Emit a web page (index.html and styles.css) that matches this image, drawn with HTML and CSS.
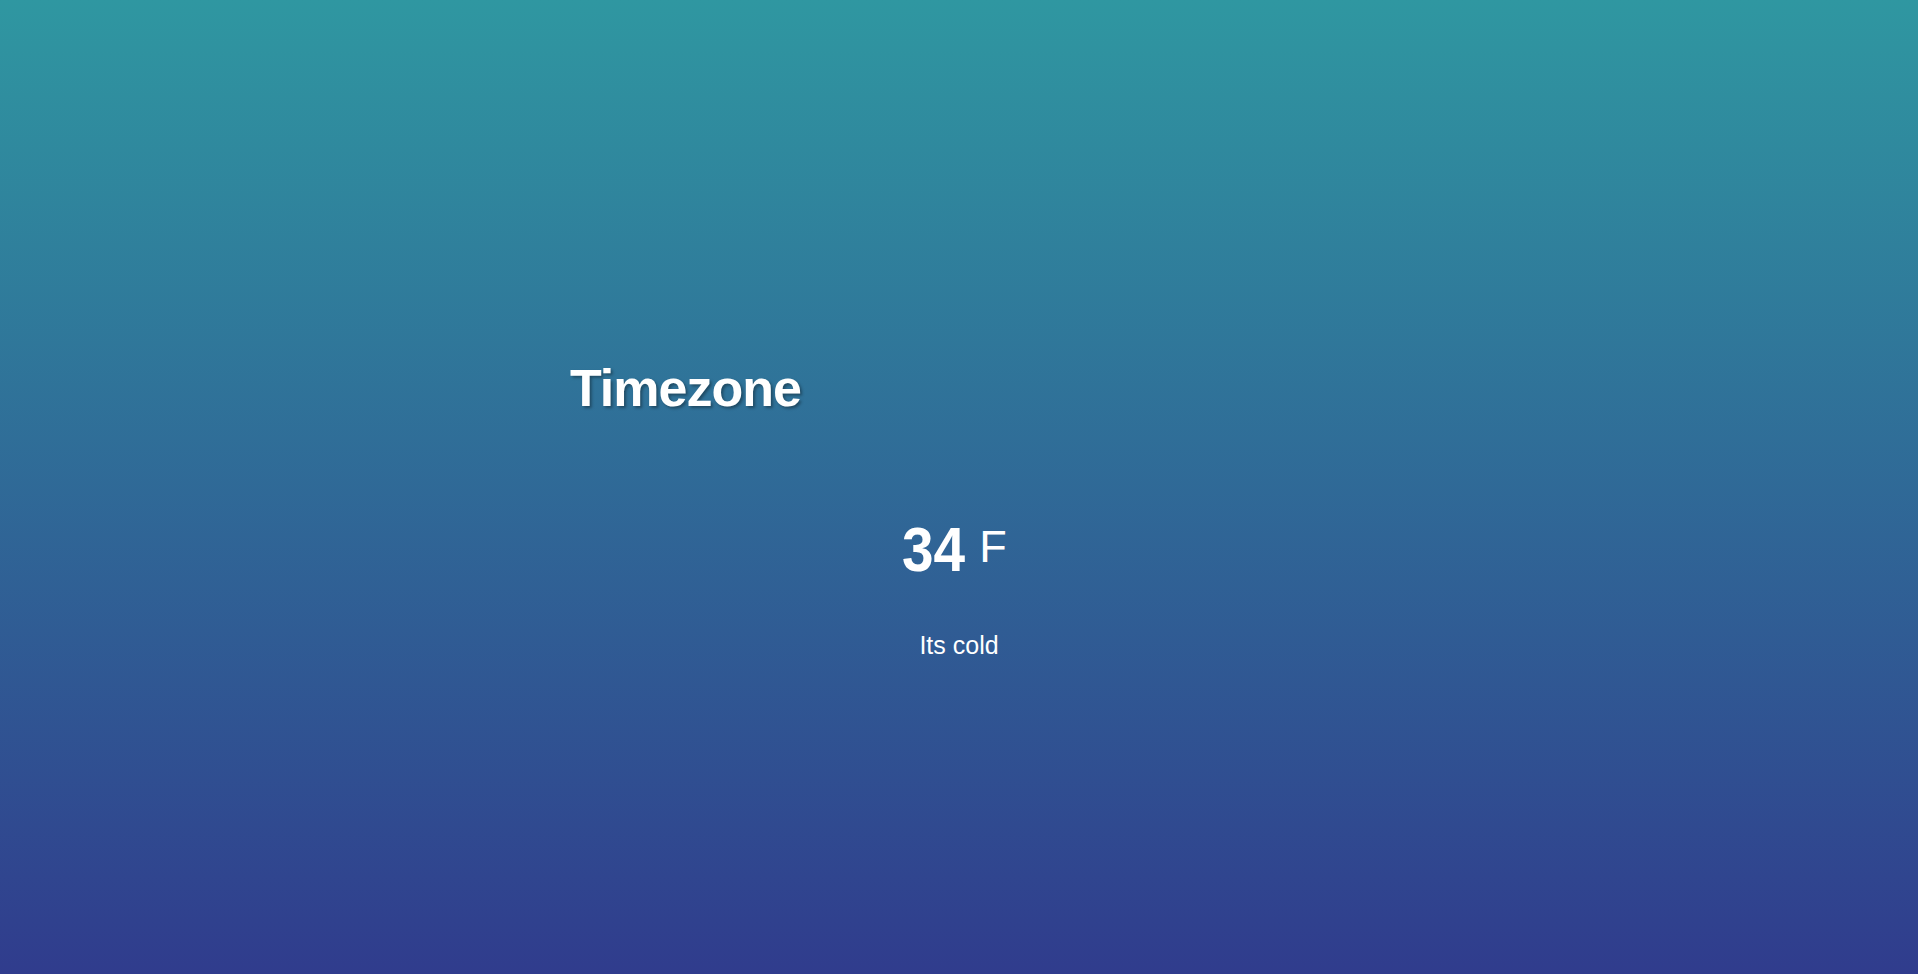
FILE: index.html
```html
<!DOCTYPE html>
<html lang="en">
<head>
<meta charset="utf-8">
<title>Weather</title>
<link rel="stylesheet" href="styles.css">
</head>
<body>
<main class="app">
  <section class="location">
    <h1 class="timezone">Timezone</h1>
  </section>
  <section class="temperature">
    <div class="degree-row">
      <span class="degree">34</span>
      <span class="unit">F</span>
    </div>
    <p class="description">Its cold</p>
  </section>
</main>
</body>
</html>
```
FILE: styles.css
```css
html, body {
  margin: 0;
  padding: 0;
  height: 100%;
}

body {
  background: linear-gradient(to bottom, rgb(47, 151, 161), rgb(48, 60, 141));
  color: #ffffff;
  font-family: "Liberation Sans", Arial, sans-serif;
  overflow: hidden;
}

.app {
  width: 778px;
  margin: 0 auto;
  padding-top: 362px;
}

.timezone {
  margin: 0;
  font-size: 52px;
  line-height: 1;
  font-weight: 700;
  letter-spacing: -1px;
  text-shadow: 2px 2px 3px rgba(0, 0, 0, 0.35);
}

.temperature {
  margin-top: 104px;
  display: flex;
  flex-direction: column;
  align-items: center;
}

.degree-row {
  display: flex;
  align-items: flex-start;
  padding-right: 9px;
}

.degree {
  display: inline-block;
  font-size: 63px;
  line-height: 1;
  font-weight: 700;
  transform: scaleX(0.9);
  transform-origin: left center;
}

.unit {
  margin-left: 7px;
  margin-top: 6px;
  font-size: 45px;
  line-height: 1;
  font-weight: 400;
}

.description {
  margin: 52px 0 0;
  font-size: 25px;
  line-height: 1;
}
```
